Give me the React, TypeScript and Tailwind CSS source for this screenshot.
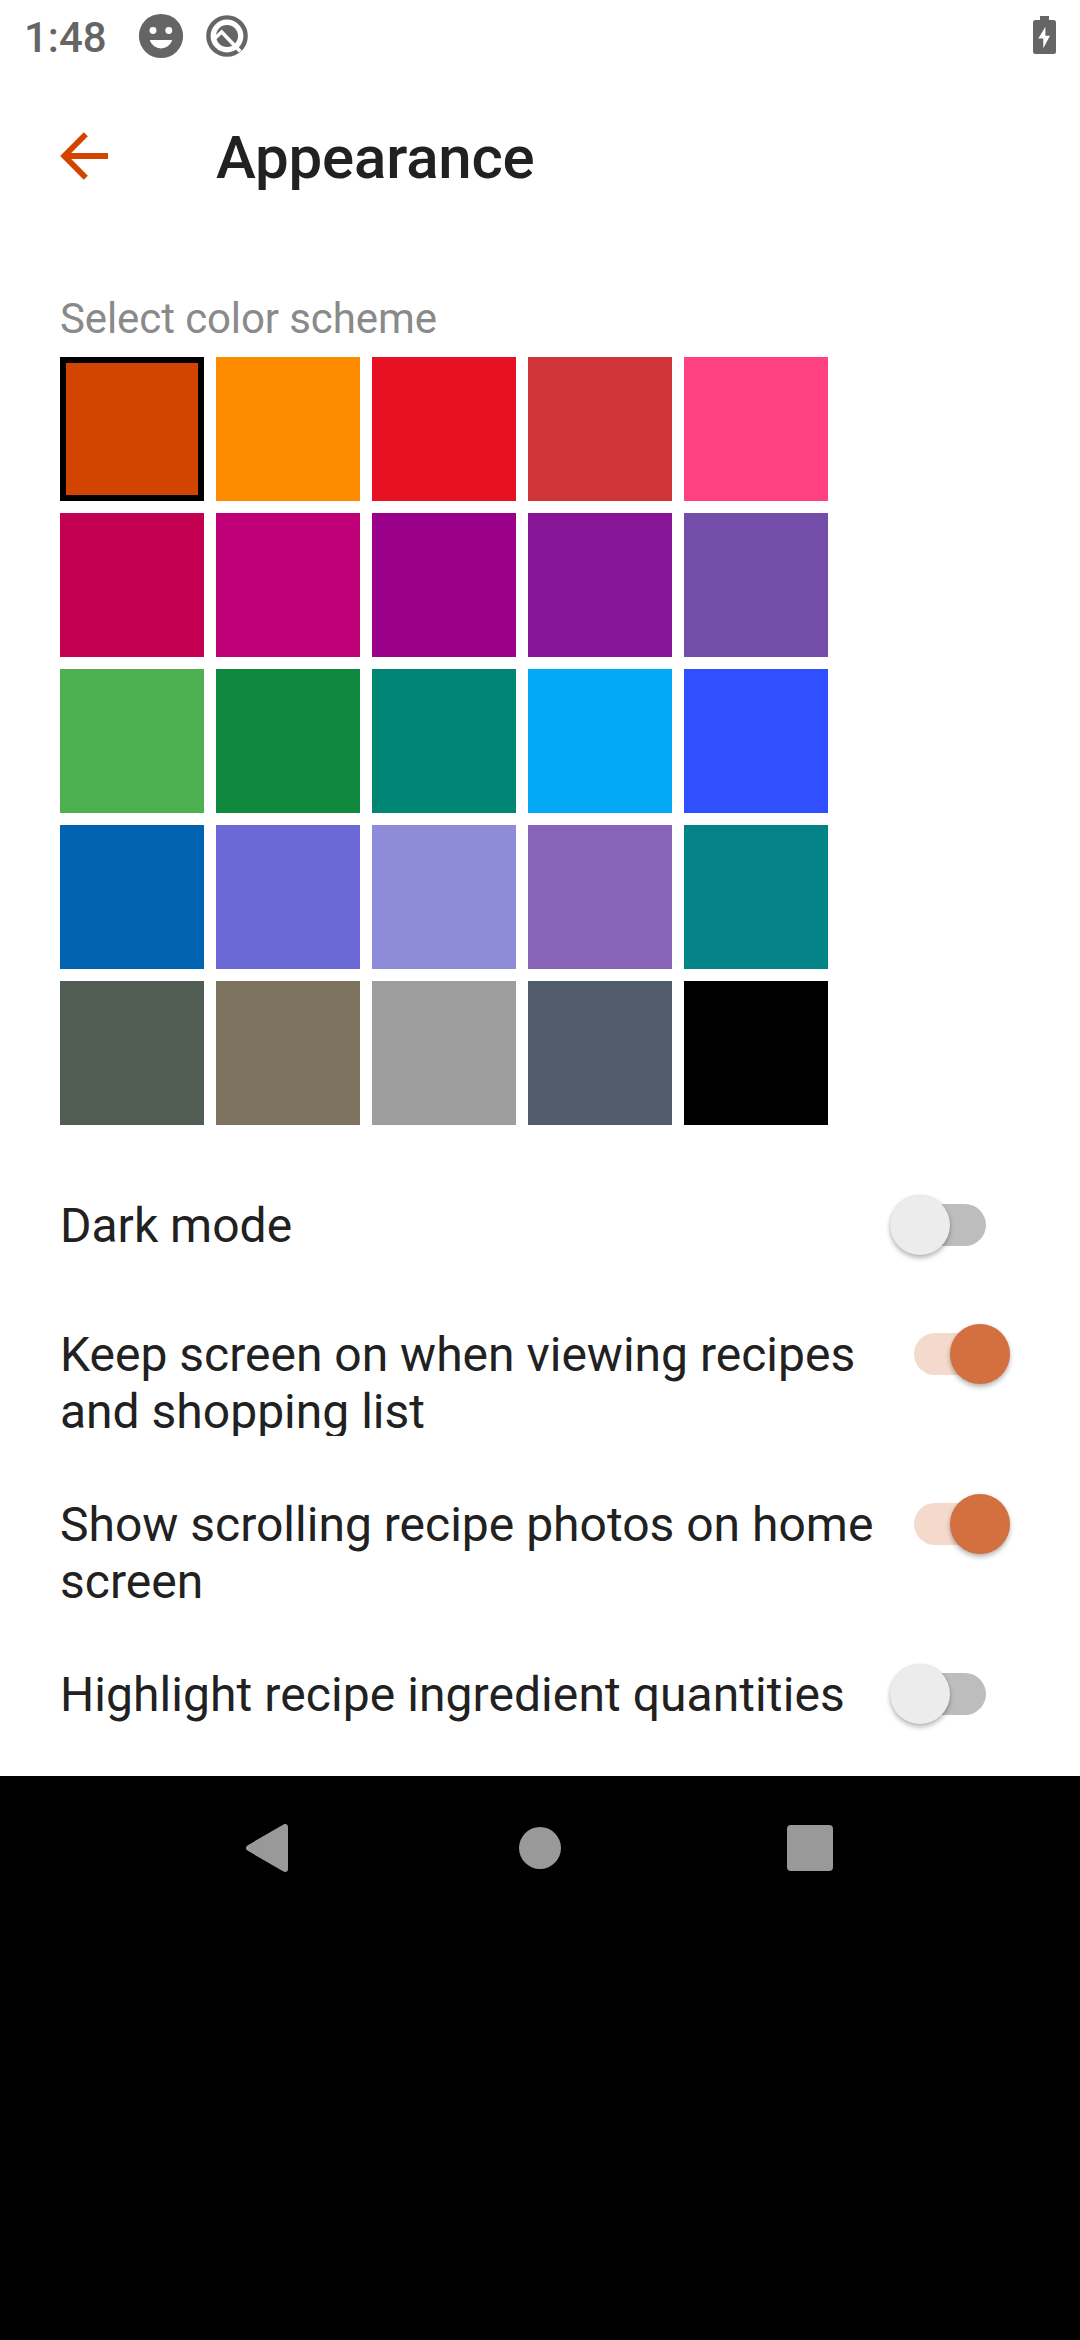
const swatches = [
  'bg-[#d24400]', 'bg-[#ff8c00]', 'bg-[#e81123]', 'bg-[#d13438]', 'bg-[#ff4081]',
  'bg-[#c30052]', 'bg-[#bf0077]', 'bg-[#9a0089]', 'bg-[#881798]', 'bg-[#744da9]',
  'bg-[#4caf50]', 'bg-[#10893e]', 'bg-[#018574]', 'bg-[#03a9f4]', 'bg-[#304ffe]',
  'bg-[#0063b1]', 'bg-[#6b69d6]', 'bg-[#8e8cd8]', 'bg-[#8764b8]', 'bg-[#038387]',
  'bg-[#525e54]', 'bg-[#7e735f]', 'bg-[#9e9e9e]', 'bg-[#515c6b]', 'bg-black',
];

const settings = [
  { label: 'Dark mode', on: false, row: 'h-[130px]', text: 'mt-px h-[57px]' },
  { label: 'Keep screen on when viewing recipes and shopping list', on: true, row: 'h-[170px]', text: 'h-[110px]' },
  { label: 'Show scrolling recipe photos on home screen', on: true, row: 'h-[170px]', text: 'h-[114px]' },
  { label: 'Highlight recipe ingredient quantities', on: false, row: 'h-[110px]', text: 'h-[57px] tracking-[0.07px]' },
];

function Switch({ on, first }: { on: boolean; first: boolean }) {
  return (
    <button
      role="switch"
      aria-checked={on}
      className={`relative h-[42px] w-[72px] shrink-0 rounded-full ${first ? 'mt-2' : 'mt-[7px]'} ${on ? 'bg-[#f4dacc]' : 'bg-[#bdbdbd]'}`}
    >
      <span
        className={`absolute -top-[9px] size-[60px] rounded-full shadow-[0_3px_5px_rgba(0,0,0,0.28),0_0_2px_rgba(0,0,0,0.1)] ${on ? 'left-9 bg-[#d47040]' : '-left-6 bg-[#ececec]'}`}
      />
    </button>
  );
}

function StatusBar() {
  return (
    <header className="flex h-[72px] items-center pl-6 pr-6 text-[#656565]">
      <span className="mt-[3px] w-[111px] text-[42px] font-medium leading-[49px]">1:48</span>
      <svg className="size-[52px]" viewBox="0 0 24 24" fill="currentColor">
        <path
          fillRule="evenodd"
          d="M12 1.8a10.2 10.2 0 1 0 0 20.4 10.2 10.2 0 0 0 0-20.4ZM8.300 7.900a1.600 1.600 0 1 1 0 3.200 1.600 1.600 0 0 1 0-3.200Zm7.300 0a1.600 1.600 0 1 1 0 3.200 1.600 1.600 0 0 1 0-3.200ZM6.800 13.800h10.400a5.400 5.400 0 0 1-10.400 0Z"
        />
      </svg>
      <svg className="-mt-px ml-[19px] size-[42px]" viewBox="0 0 42 42" fill="none">
        <circle cx="21" cy="21" r="18.600" stroke="currentColor" strokeWidth="4.400" />
        <circle cx="21" cy="21" r="11" fill="currentColor" />
        <path d="m7.500 24.500 8.200-7.500 18.600 19.500" stroke="white" strokeWidth="3.600" />
      </svg>
      <svg className="-mt-px ml-auto h-[39px] w-[23px]" viewBox="0 0 23 39" fill="currentColor">
        <path
          fillRule="evenodd"
          d="M7 0h9v4h4.500a2.500 2.500 0 0 1 2.500 2.500v29a2.500 2.500 0 0 1-2.500 2.500h-18A2.500 2.500 0 0 1 0 35.500v-29A2.500 2.500 0 0 1 2.500 4H7ZM12.400 10.700 5.300 22.500H10.300v9.800L17 19.700h-4.600Z"
        />
      </svg>
    </header>
  );
}

export default function App() {
  return (
    <div className="flex h-[2340px] w-[1080px] flex-col bg-black font-['Roboto',sans-serif] text-[#212121]">
      <main className="flex h-[1776px] flex-col bg-white">
        <StatusBar />
        <div className="flex h-[168px] items-start pl-[60px] pt-[50px]">
          <svg className="mt-[10px] h-[48px] w-[48px]" viewBox="0 0 48 48" fill="none" stroke="#d24400" strokeWidth="5.8">
            <path d="M48 24H4M25.800 2.300 4.200 24l21.600 21.700" />
          </svg>
          <h1 className="ml-[108px] text-[60px] font-medium leading-[72px] tracking-[-0.2px]">Appearance</h1>
        </div>
        <section className="px-[60px]">
          <h2 className="mt-[54px] h-[63px] text-[42px] leading-[49px] tracking-[-0.1px] text-[#8a8a8a]">Select color scheme</h2>
          <div className="grid w-[768px] grid-cols-5 gap-3">
            {swatches.map((color, i) => (
              <button
                key={color}
                aria-label={`Color ${i + 1}`}
                className={`size-[144px] ${color} ${i === 0 ? 'border-[6px] border-black' : ''}`}
              />
            ))}
          </div>
        </section>
        <section className="pl-[60px] pr-[94px] pt-[71px]">
          {settings.map((s, i) => (
            <div key={s.label} className={`flex items-start justify-between ${s.row}`}>
              <p className={`w-[825px] overflow-hidden text-[48px] leading-[57px] ${s.text}`}>{s.label}</p>
              <Switch on={s.on} first={i === 0} />
            </div>
          ))}
        </section>
      </main>
      <nav className="grid h-[144px] grid-cols-[270px_270px_270px] justify-center">
        <div className="flex items-center justify-center">
          <svg className="mr-[6px] h-12 w-[42px]" viewBox="0 0 42 48">
            <path d="M3 24 39 3v42Z" fill="#999" stroke="#999" strokeWidth="6" strokeLinejoin="round" />
          </svg>
        </div>
        <div className="flex items-center justify-center">
          <span className="size-[42px] rounded-full bg-[#999]" />
        </div>
        <div className="flex items-center justify-center">
          <span className="size-[46px] rounded-[4px] bg-[#999]" />
        </div>
      </nav>
    </div>
  );
}
